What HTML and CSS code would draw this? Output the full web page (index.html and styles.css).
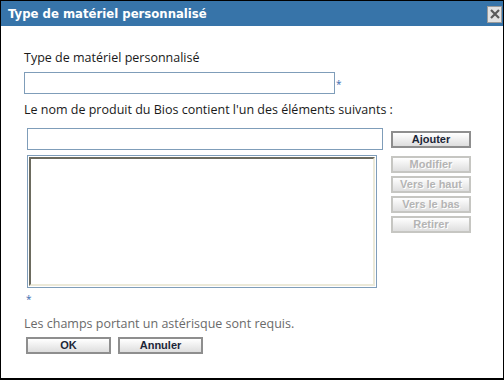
FILE: index.html
```html
<!DOCTYPE html>
<html lang="fr">
<head>
    <meta charset="UTF-8">
    <title>Type de matériel personnalisé</title>
    <link rel="stylesheet" href="styles.css">
</head>
<body>
    <div class="dialog">
        <div class="titlebar">
            <span class="title">Type de matériel personnalisé</span>
            <button class="close" title="Fermer">
                <svg width="12" height="12" viewBox="0 0 12 12">
                    <path d="M2 2 L10 10 M10 2 L2 10" stroke="#5a5a5a" stroke-width="2.2" fill="none"/>
                </svg>
            </button>
        </div>
        <form class="content">
            <label class="field-label" for="typeName">Type de matériel personnalisé</label>
            <div class="name-row">
                <input type="text" id="typeName" class="text-input name-input">
                <span class="req">*</span>
            </div>
            <label class="field-label second" for="biosItem">Le nom de produit du Bios contient l'un des éléments suivants :</label>
            <div class="list-editor">
                <div class="list-col">
                    <input type="text" id="biosItem" class="text-input item-input">
                    <div class="listbox"><div class="listbox-inner"></div></div>
                </div>
                <div class="btn-col">
                    <button type="button" class="btn add">Ajouter</button>
                    <div class="btn-stack">
                        <button type="button" class="btn" disabled>Modifier</button>
                        <button type="button" class="btn" disabled>Vers le haut</button>
                        <button type="button" class="btn" disabled>Vers le bas</button>
                        <button type="button" class="btn" disabled>Retirer</button>
                    </div>
                </div>
            </div>
            <div class="req solo">*</div>
            <p class="note">Les champs portant un astérisque sont requis.</p>
            <div class="actions">
                <button type="submit" class="btn">OK</button>
                <button type="button" class="btn">Annuler</button>
            </div>
        </form>
    </div>
</body>
</html>
```

FILE: styles.css
```css
html, body {
    margin: 0;
    padding: 0;
    background: #fff;
}
.dialog {
    width: 504px;
    height: 380px;
    box-sizing: border-box;
    border: 1px solid #000;
    border-bottom-width: 2px;
    font-family: 'Open Sans', 'DejaVu Sans', sans-serif;
    color: #1a1a1a;
}
.titlebar {
    height: 25px;
    background: #3774a9;
    display: flex;
    align-items: center;
    justify-content: space-between;
    padding: 0 1px 0 7px;
}
.title {
    color: #fff;
    font-family: 'DejaVu Sans', sans-serif;
    font-weight: bold;
    font-size: 11.7px;
}
.close {
    width: 15px;
    height: 17px;
    padding: 0;
    margin-top: 1px;
    border: 1px solid #9a9a9a;
    background: #e2e2e2;
    display: flex;
    align-items: center;
    justify-content: center;
}
.content {
    padding: 24px 0 0 23px;
    margin: 0;
}
.field-label {
    display: block;
    font-size: 12.5px;
    line-height: 16px;
}
.field-label.second {
    margin-top: 8px;
}
.name-row {
    display: flex;
    align-items: flex-start;
    margin-top: 6px;
}
.text-input {
    box-sizing: border-box;
    height: 22px;
    border: 1px solid #7f9db9;
    margin: 0;
    padding: 2px 4px;
    font-size: 12px;
}
.name-input {
    width: 311px;
}
.req {
    color: #3b6db0;
    font-size: 10px;
    line-height: 10px;
    margin: 7px 0 0 1px;
}
.list-editor {
    display: flex;
    margin-top: 10px;
    padding-left: 3px;
}
.list-col {
    display: flex;
    flex-direction: column;
    gap: 5px;
}
.item-input {
    width: 356px;
}
.listbox {
    width: 350px;
    height: 133px;
    box-sizing: border-box;
    border: 1px solid #7f9db9;
    padding: 1px;
}
.listbox-inner {
    height: 100%;
    box-sizing: border-box;
    border: 2px solid;
    border-color: #6c6b5f #ece9d8 #ece9d8 #6c6b5f;
}
.btn-col {
    margin-left: 8px;
    padding-top: 3px;
}
.btn-stack {
    display: flex;
    flex-direction: column;
    gap: 3px;
    margin-top: 8px;
}
.btn {
    display: block;
    width: 80px;
    height: 17px;
    box-sizing: border-box;
    padding: 0;
    border: 2px solid #8e8e8e;
    background: linear-gradient(#ffffff, #dedede);
    font-family: 'Liberation Sans', sans-serif;
    font-weight: bold;
    font-size: 11px;
    line-height: 13px;
    color: #1c2638;
}
.btn:disabled {
    border-color: #c6c6c2;
    color: #b4b4b4;
    text-shadow: 1px 1px 0 #fff;
}
.req.solo {
    margin: 6px 0 0 2px;
}
.note {
    margin: 12px 0 0;
    color: #6a6a6a;
    font-size: 12.5px;
    line-height: 16px;
}
.actions {
    display: flex;
    gap: 7px;
    margin: 5px 0 0 2px;
}
.actions .btn {
    width: 85px;
}
```
